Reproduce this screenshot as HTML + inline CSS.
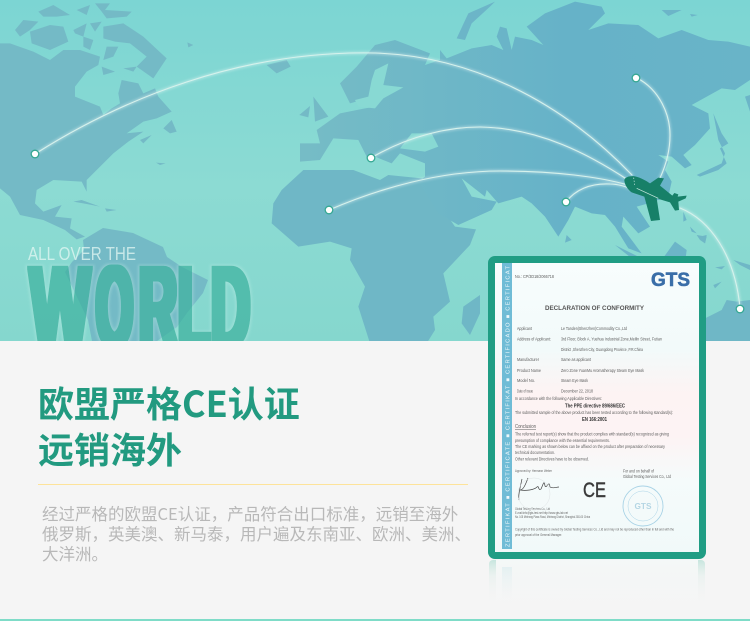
<!DOCTYPE html>
<html><head><meta charset="utf-8"><style>
html,body{margin:0;padding:0}
body{width:750px;height:621px;overflow:hidden;position:relative;background:#f5f5f5;font-family:"Noto Sans CJK SC","Liberation Sans",sans-serif}
svg{position:absolute;left:0;top:0}
.h{position:absolute;left:38px;font-size:36px;font-weight:700;color:#229a80;line-height:47px;white-space:nowrap}
.p{position:absolute;left:42px;top:503px;font-size:16.5px;line-height:20px;color:#b8b8b8;white-space:nowrap}
</style></head><body>
<svg width="750" height="621" viewBox="0 0 750 621">
<defs>
<linearGradient id="oc" x1="0" y1="0" x2="0" y2="1"><stop offset="0" stop-color="#7cd5d3"/><stop offset=".55" stop-color="#8cdbd3"/><stop offset="1" stop-color="#85d7ce"/></linearGradient>
<linearGradient id="ld" x1="0" y1="0" x2="1" y2="0"><stop offset="0" stop-color="#76bcc6"/><stop offset=".6" stop-color="#66b2c8"/><stop offset="1" stop-color="#69b4c8"/></linearGradient>
<linearGradient id="rf" x1="0" y1="0" x2="0" y2="1"><stop offset="0" stop-color="#8fd3c2" stop-opacity=".45"/><stop offset=".35" stop-color="#c4e5dc" stop-opacity=".2"/><stop offset="1" stop-color="#f5f5f5" stop-opacity="0"/></linearGradient>
<linearGradient id="rp" x1="0" y1="0" x2="0" y2="1"><stop offset="0" stop-color="#f7f9f9" stop-opacity=".95"/><stop offset="1" stop-color="#f5f5f5" stop-opacity=".6"/></linearGradient>
<linearGradient id="rb" x1="0" y1="0" x2="0" y2="1"><stop offset="0" stop-color="#bfe0e6" stop-opacity=".3"/><stop offset="1" stop-color="#f5f5f5" stop-opacity="0"/></linearGradient>
<linearGradient id="pp" x1="0" y1="0" x2="0" y2="1"><stop offset="0" stop-color="#f8fdfd"/><stop offset=".3" stop-color="#f2fafa"/><stop offset=".45" stop-color="#fdf3f3"/><stop offset=".6" stop-color="#fdf3f4"/><stop offset=".75" stop-color="#f5fbfb"/><stop offset="1" stop-color="#f1f9f9"/></linearGradient>
<filter id="gl" x="-20%" y="-20%" width="140%" height="140%"><feGaussianBlur stdDeviation="1.3"/></filter>
<filter id="sf" x="-5%" y="-5%" width="110%" height="110%"><feGaussianBlur stdDeviation=".32"/></filter>
<filter id="wd" x="-10%" y="-10%" width="120%" height="120%">
<feMorphology in="SourceGraphic" operator="dilate" radius="3 1.5" result="d"/>
<feMorphology in="SourceAlpha" operator="dilate" radius="4.5 2.5" result="a"/>
<feGaussianBlur in="a" stdDeviation="1.2" result="b"/>
<feFlood flood-color="#c4f0e8" flood-opacity=".45"/>
<feComposite in2="b" operator="in" result="g"/>
<feMerge><feMergeNode in="g"/><feMergeNode in="d"/></feMerge>
</filter>
<clipPath id="mc"><rect width="750" height="341"/></clipPath>
</defs>
<g clip-path="url(#mc)">
<rect width="750" height="341" fill="url(#oc)"/>
<g transform="scale(.33333)" fill="#74bac6">
<polygon points="45,90 70,60 115,65 90,90 60,110"/>
<polygon points="90,95 150,75 190,80 205,125 150,150 95,130"/>
<polygon points="115,35 160,15 210,45 170,50 130,50"/>
<polygon points="230,30 270,15 260,45"/>
<polygon points="285,10 330,10 315,30 395,35 380,50 320,55 305,35"/>
<polygon points="220,90 260,70 250,110 225,100"/>
<polygon points="270,70 305,65 285,95"/>
<polygon points="310,80 370,70 430,110 500,175 460,235 410,200 440,170 390,130 345,125 310,115"/>
<polygon points="250,110 280,120 270,150 250,140"/>
<polygon points="320,140 355,140 340,170 310,180"/>
<polygon points="305,200 345,215 310,225"/>
<polygon points="370,205 410,200 400,215"/>
<polygon points="0,130 30,130 100,155 150,180 190,150 240,150 300,170 295,195 260,215 225,260 225,290 300,320 310,345 335,325 360,310 355,280 365,240 415,250 430,280 465,265 475,290 515,335 470,355 430,365 380,400 430,395 385,425 340,460 310,490 260,540 260,575 245,545 160,540 110,570 105,610 130,635 185,615 165,650 215,655 210,685 255,710 230,718 195,690 130,660 60,645 30,590 0,565"/>
<polygon points="490,385 515,360 530,395 510,400"/>
<polygon points="420,420 455,405 430,430"/>
<polygon points="800,195 860,180 872,200 830,220"/>
<polygon points="220,605 245,600 300,620 260,612"/>
<polygon points="315,625 350,630 320,635"/>
<polygon points="468,488 497,490 480,495"/>
<polygon points="562,127 580,135 565,142"/>
<polygon points="898,345 930,318 925,352"/>
<polygon points="940,290 985,350 945,365"/>
</g>
<polygon fill="#74bac6" points="83,240 103,228 133,233 163,247 167,257 182,267 208,280 203,293 187,313 177,327 157,341 92,341 88,320 77,297 65,272 72,262 84,250"/>
<g transform="translate(270,170) scale(.33333)" fill="#6fb7c6">
<polygon points="100,0 250,0 330,30 355,15 455,25 500,90 555,170 618,178 600,225 520,310 540,395 490,440 495,480 470,520 300,520 265,410 285,350 240,270 245,235 180,215 85,230 5,160 10,100 35,60"/>
<polygon points="630,375 630,430 600,495 575,460 580,410"/>
</g>
<g transform="translate(375,0) scale(.33333)">
<polygon fill="url(#ld)" points="-105,250 -55,200 0,135 60,120 165,160 150,195 195,180 195,150 215,175 290,145 350,135 385,150 365,110 375,80 395,85 410,150 420,110 470,120 505,135 455,80 510,40 600,5 680,20 690,40 640,90 700,70 790,75 850,115 920,90 1000,120 1060,125 1125,140 1125,240 1080,270 1040,265 950,315 1000,340 1005,385 960,435 925,465 950,495 930,505 890,470 850,465 880,485 870,510 890,545 880,590 820,610 785,620 825,680 790,700 745,650 740,680 800,760 760,745 720,680 690,645 650,640 600,620 580,660 550,710 510,650 470,610 440,590 370,610 335,570 330,590 260,535 290,590 365,605 350,630 250,675 190,640 130,545 150,530 150,490 75,460 50,490 0,470 -20,480 -50,420 -125,415 -165,480 -225,485 -225,430 -165,430 -175,390 -105,340 -30,325 0,320 -40,300 -75,310"/>
<g fill="#88d9d3">
<polygon points="0,210 40,190 25,255 85,262 25,295 0,325 -50,320 -60,300 -20,290 -10,240"/>
<polygon points="75,445 110,400 170,400 190,440 150,455"/>
</g>
<g fill="#6cb5c8">
<polygon points="245,115 280,40 360,5 345,20 290,70 270,120"/>
<polygon points="860,30 920,30 880,48"/>
<polygon points="945,42 968,45 950,50"/>
<polygon points="965,525 1040,490 1050,460 1030,420 1015,340 1040,400 1060,430 1035,445 1055,490 1030,510 975,530"/>
<polygon points="1110,290 1125,285 1125,335"/>
<polygon points="575,705 590,720 570,728"/>
<polygon points="720,735 790,770 770,775"/>
<polygon points="860,780 900,725 935,750 930,790 860,790"/>
<polygon points="925,635 935,660 925,665"/>
<polygon points="975,710 995,705 990,730"/>
<polygon points="945,680 965,700 950,695"/>
</g>
</g>
<g transform="translate(690,230) scale(.33333)" fill="#6fb7c6">
<polygon points="0,345 45,265 95,240 110,210 140,215 180,210 180,345"/>
<polygon points="130,90 180,105 180,120 150,105"/>
<polygon points="70,165 95,155 75,175"/>
<polygon points="20,15 50,20 45,40 30,30"/>
<polygon points="75,112 105,108 95,118"/>
</g>
<g opacity=".72">
<g filter="url(#wd)" font-family="Liberation Sans" font-weight="700" font-size="114" fill="#3fb3a0">
<text x="30" y="346" textLength="60" lengthAdjust="spacingAndGlyphs">W</text>
<text x="96" y="346" textLength="37" lengthAdjust="spacingAndGlyphs">O</text>
<text x="139" y="346" textLength="38" lengthAdjust="spacingAndGlyphs">R</text>
<text x="178" y="346" textLength="32" lengthAdjust="spacingAndGlyphs">L</text>
<text x="211" y="346" textLength="39" lengthAdjust="spacingAndGlyphs">D</text>
</g>
</g>
<text x="28" y="260" font-family="Liberation Sans" font-size="18" fill="#e4f7f3" fill-opacity=".75" textLength="108" lengthAdjust="spacingAndGlyphs">ALL OVER THE</text>
<g fill="none" stroke-linecap="round">
<g stroke="#ffffff" stroke-width="3" opacity=".35" filter="url(#gl)">
<path d="M35 154C120 100 240 50 375 53C470 56 560 100 632 175"/>
<path d="M371 158C410 135 450 127 480 127C540 128 590 155 628 180"/>
<path d="M329 210C380 188 440 171 500 171C555 171 600 177 628 185"/>
<path d="M566 202C575 190 590 183 610 184C620 184 630 188 638 192"/>
<path d="M637 78C660 90 670 115 670 135C670 150 666 165 660 178"/>
<path d="M680 208C710 220 735 255 740 308"/>
</g>
<g stroke="#d6f2ec" stroke-width="1.1">
<path d="M35 154C120 100 240 50 375 53C470 56 560 100 632 175"/>
<path d="M371 158C410 135 450 127 480 127C540 128 590 155 628 180"/>
<path d="M329 210C380 188 440 171 500 171C555 171 600 177 628 185"/>
<path d="M566 202C575 190 590 183 610 184C620 184 630 188 638 192"/>
<path d="M637 78C660 90 670 115 670 135C670 150 666 165 660 178"/>
<path d="M680 208C710 220 735 255 740 308"/>
</g>
</g>
<g fill="#fff" stroke="#35a892" stroke-width="1.3">
<circle cx="35" cy="154" r="3.8"/><circle cx="371" cy="158" r="3.8"/><circle cx="329" cy="210" r="3.8"/>
<circle cx="566" cy="202" r="3.8"/><circle cx="636" cy="78" r="3.8"/><circle cx="740" cy="309" r="3.8"/>
</g>
<g transform="translate(615,165) scale(.33333)">
<path fill="#178068" d="M28 45C30 36 46 32 60 34C75 37 95 48 105 55L130 38L147 40L135 62L172 92L178 84L190 88L188 95L215 92L212 100L190 110L192 135L180 137L165 112L125 100L135 165L108 168L88 95L50 82C38 74 28 58 28 45Z"/>
<path fill="none" stroke="#cdebe3" stroke-width="2" d="M65 70L130 100"/>
<path fill="none" stroke="#cdebe3" stroke-width="2" stroke-dasharray="4 5" d="M56 38L59 60"/>
</g>
</g>
<rect x="489" y="560" width="216" height="46" rx="4" fill="url(#rf)"/>
<rect x="496" y="560" width="202" height="46" fill="url(#rp)"/>
<rect x="502" y="567" width="10" height="38" fill="url(#rb)"/>
<rect x="38" y="484" width="430" height="1" fill="#fde39a"/>
<rect y="619" width="750" height="2" fill="#7fdcc8"/>
<rect x="488" y="256" width="218" height="303" rx="7" fill="#209d84"/>
<rect x="495" y="263" width="204" height="289" fill="url(#pp)"/>
<rect x="502" y="263" width="10" height="286" fill="#70bcd6"/>
<text transform="translate(509.5,547) rotate(-90)" font-family="Liberation Sans" font-size="5.8" fill="#eef8fb" textLength="281" lengthAdjust="spacing">ZERTIFIKAT ■ CERTIFICATE ■ CERTIFIKAT ■ CERTIFICADO ■ CERTIFICAT</text>
<g filter="url(#sf)">
<g font-family="Liberation Sans" font-size="4.6" fill="#5c5c5c">
<text x="515" y="278" textLength="39" lengthAdjust="spacingAndGlyphs">No.: CP/3D18/2066718</text>
<text x="517" y="330" textLength="15" lengthAdjust="spacingAndGlyphs">Applicant</text><text x="561" y="330" textLength="66" lengthAdjust="spacingAndGlyphs">Le Tanden(Shenzhen)Commodity Co.,Ltd</text>
<text x="517" y="340.5" textLength="34" lengthAdjust="spacingAndGlyphs">Address of Applicant:</text><text x="561" y="340.5" textLength="101" lengthAdjust="spacingAndGlyphs">3rd Floor, Block A, Yuehua Industrial Zone,Meilin Street, Futian</text>
<text x="561" y="351" textLength="82" lengthAdjust="spacingAndGlyphs">District ,Shenzhen City, Guangdong Province ,P.R.China</text>
<text x="517" y="361" textLength="22" lengthAdjust="spacingAndGlyphs">Manufacturer</text><text x="561" y="361" textLength="30" lengthAdjust="spacingAndGlyphs">Same as applicant</text>
<text x="517" y="372" textLength="24" lengthAdjust="spacingAndGlyphs">Product Name</text><text x="561" y="372" textLength="83" lengthAdjust="spacingAndGlyphs">Zero Zone YuanMu Aromatherapy Steam Eye Mask</text>
<text x="517" y="382" textLength="18" lengthAdjust="spacingAndGlyphs">Model No.</text><text x="561" y="382" textLength="27" lengthAdjust="spacingAndGlyphs">Steam Eye Mask</text>
<text x="517" y="392.500" textLength="16" lengthAdjust="spacingAndGlyphs">Date of issue</text><text x="561" y="392.500" textLength="32" lengthAdjust="spacingAndGlyphs">December 22, 2018</text>
<text x="515" y="400" textLength="87" lengthAdjust="spacingAndGlyphs">In accordance with the following Applicable Directives:</text>
<text x="515" y="414" textLength="158" lengthAdjust="spacingAndGlyphs">The submitted sample of the above product has been tested according to the following standard(s):</text>
<text x="515" y="428" textLength="21" lengthAdjust="spacingAndGlyphs" text-decoration="underline" font-size="5">Conclusion</text>
<text x="515" y="435.500" textLength="154" lengthAdjust="spacingAndGlyphs">The referred test report(s) show that the product complies with standard(s) recognized as giving</text>
<text x="515" y="442" textLength="95" lengthAdjust="spacingAndGlyphs">presumption of compliance with the essential requirements.</text>
<text x="515" y="448" textLength="150" lengthAdjust="spacingAndGlyphs">The CE marking as shown below can be affixed on the product after preparation of necessary</text>
<text x="515" y="454" textLength="40" lengthAdjust="spacingAndGlyphs">technical documentation.</text>
<text x="515" y="460.500" textLength="74" lengthAdjust="spacingAndGlyphs">Other relevant Directives have to be observed.</text>
<text x="623" y="472.500" textLength="31" lengthAdjust="spacingAndGlyphs">For and on behalf of</text>
<text x="623" y="478" textLength="48" lengthAdjust="spacingAndGlyphs">Global Testing Services Co., Ltd</text>
</g>
<g font-family="Liberation Sans" font-size="3.4" fill="#666">
<text x="515" y="472" textLength="37" lengthAdjust="spacingAndGlyphs">Approved by: Hermann Weber</text>
<text x="515" y="510" textLength="35" lengthAdjust="spacingAndGlyphs">Global Testing Services Co., Ltd</text>
<text x="515" y="514" textLength="53" lengthAdjust="spacingAndGlyphs">E-mail:info@gts-test.net http://www.gts-lab.net</text>
<text x="515" y="518" textLength="75" lengthAdjust="spacingAndGlyphs">No. 105 Minhang Plaza Road, Minhang District, Shanghai 201100 China</text>
<text x="515" y="530.500" textLength="159" lengthAdjust="spacingAndGlyphs">Copyright of this certificate is owned by Global Testing Services Co., Ltd and may not be reproduced other than in full and with the</text>
<text x="515" y="536" textLength="47" lengthAdjust="spacingAndGlyphs">prior approval of the General Manager.</text>
</g>
<text x="545" y="310" font-family="Liberation Sans" font-weight="700" font-size="6.400" fill="#555" textLength="99" lengthAdjust="spacingAndGlyphs">DECLARATION OF CONFORMITY</text>
<text x="565" y="407.500" font-family="Liberation Sans" font-weight="700" font-size="5" fill="#333" textLength="60" lengthAdjust="spacingAndGlyphs">The PPE directive 89/686/EEC</text>
<text x="582" y="421" font-family="Liberation Sans" font-weight="700" font-size="5" fill="#333" textLength="25" lengthAdjust="spacingAndGlyphs">EN 166:2001</text>
</g>
<text x="651" y="286" font-family="Liberation Sans" font-weight="700" font-size="19" fill="#3a6ea8" stroke="#3a6ea8" stroke-width=".6" textLength="39" lengthAdjust="spacingAndGlyphs">GTS</text>
<path fill="none" stroke="#444" stroke-width=".7" d="M522 479C520 488 518 496 519 500M528 478C525 486 523 490 520 490C526 491 534 490 537 487C539 485 538 491 541 489C543 485 544 479 545 486C547 489 549 479 550 487C553 489 556 487 559 487"/>
<circle cx="534" cy="494" r="16" fill="none" stroke="#dfe3e5" stroke-width=".5"/>
<text x="583" y="497" font-family="Liberation Sans" font-size="21" fill="#3a3a3a" stroke="#3a3a3a" stroke-width=".4" textLength="23" lengthAdjust="spacingAndGlyphs">CE</text>
<g fill="none" stroke="#a9d3e6">
<circle cx="643" cy="506" r="20" stroke-width=".9"/><circle cx="643" cy="506" r="15" stroke-width=".5"/>
</g>
<text x="634.500" y="509" font-family="Liberation Sans" font-weight="700" font-size="8" fill="#b5d6e4" textLength="17" lengthAdjust="spacingAndGlyphs">GTS</text>
</svg>
<div class="h" style="top:379px">欧盟严格CE认证</div>
<div class="h" style="top:425px">远销海外</div>
<div class="p">经过严格的欧盟CE认证，产品符合出口标准，远销至海外<br>俄罗斯，英美澳、新马泰，用户遍及东南亚、欧洲、美洲、<br>大洋洲。</div>
</body></html>
